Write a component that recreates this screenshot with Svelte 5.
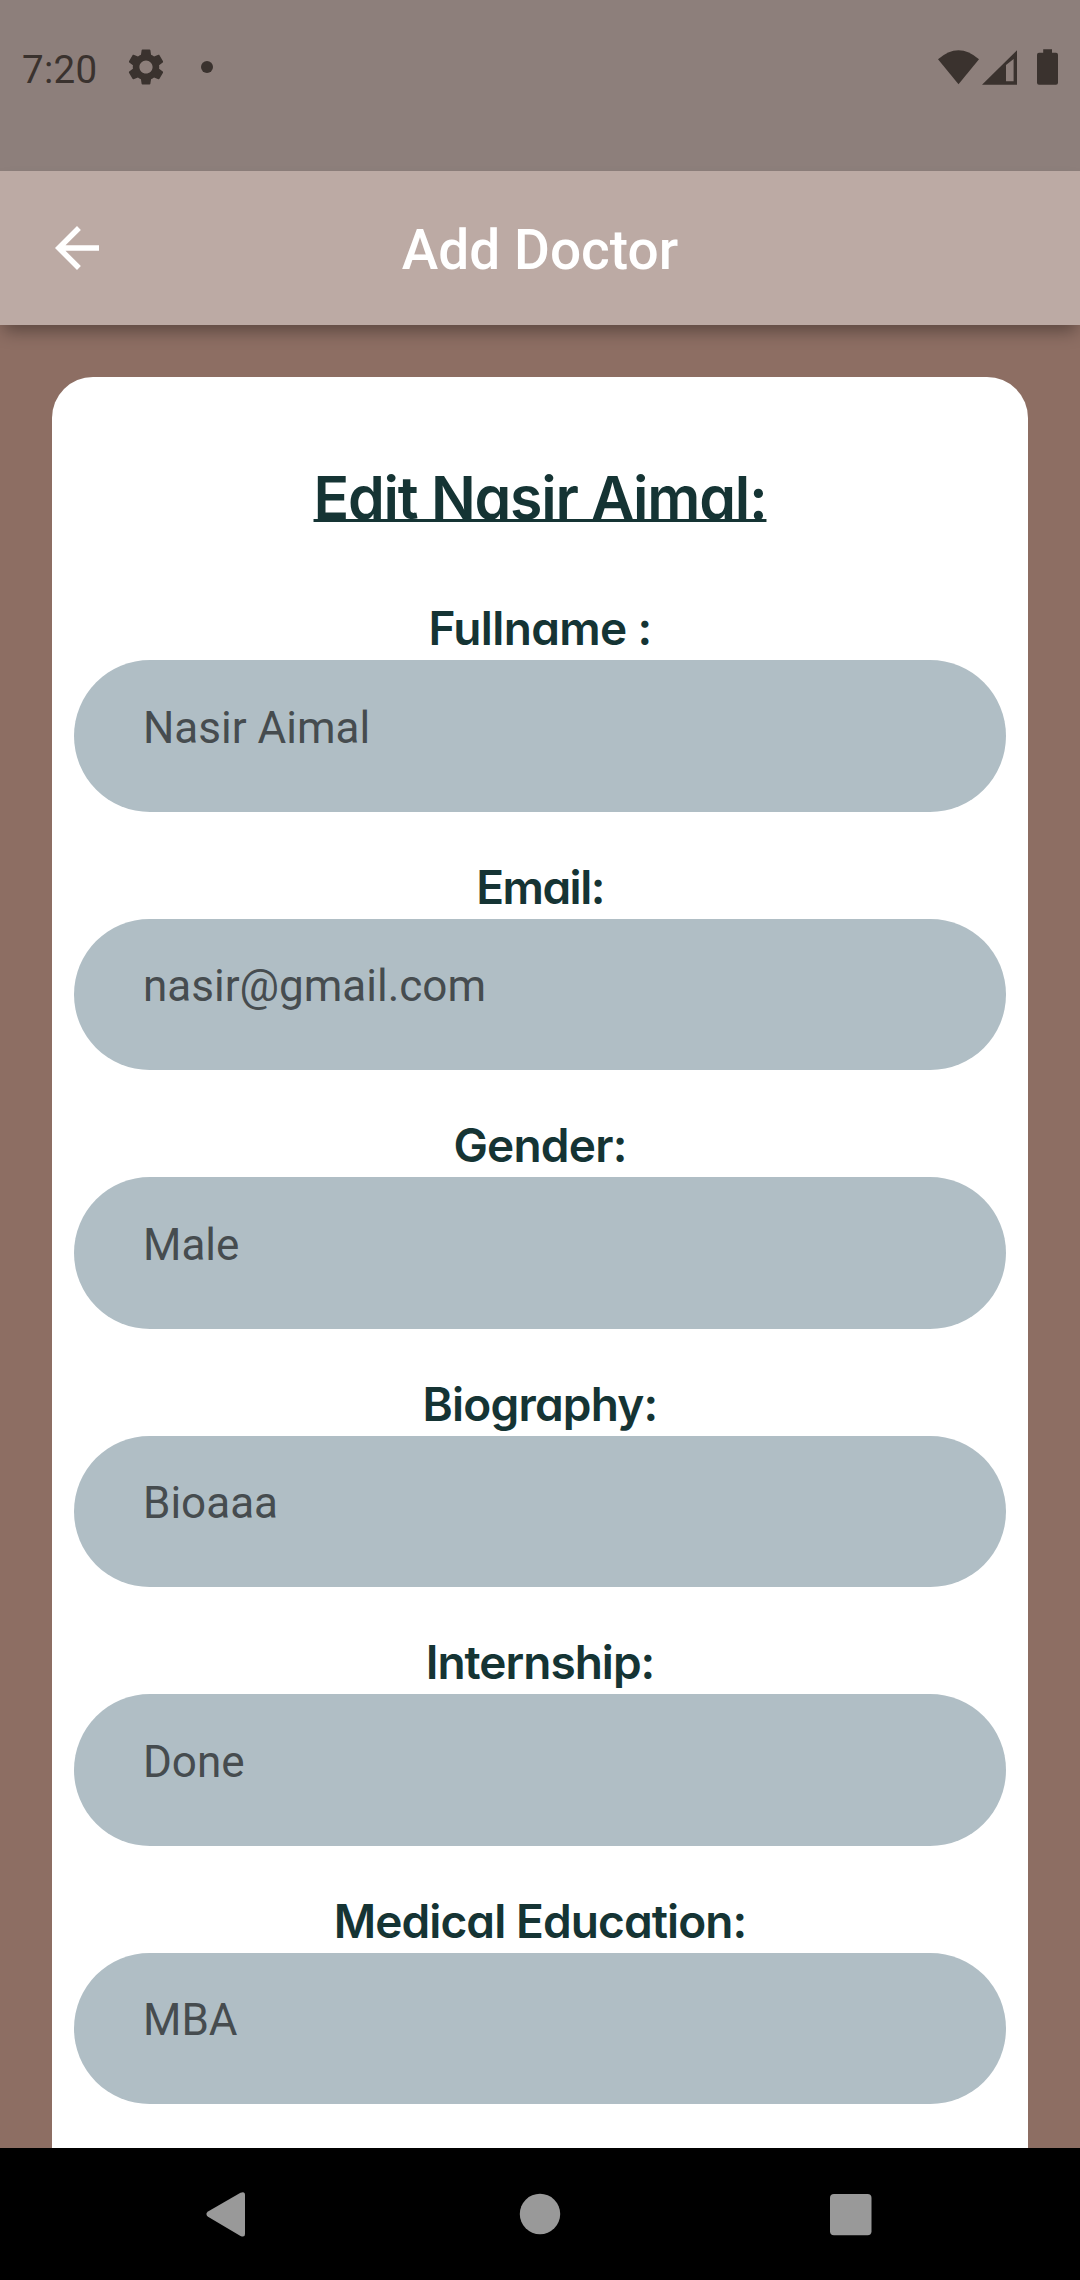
<script>
  const fields = [
    { label: 'Fullname :', value: 'Nasir Aimal', tone: 'fullname' },
    { label: 'Email:', value: 'nasir@gmail.com', tone: 'email' },
    { label: 'Gender:', value: 'Male', tone: 'gender' },
    { label: 'Biography:', value: 'Bioaaa', tone: 'biography' },
    { label: 'Internship:', value: 'Done', tone: 'internship' },
    { label: 'Medical Education:', value: 'MBA', tone: 'education' }
  ];
</script>

<div class="screen">
  <header class="status">
    <span class="time">7:20</span>
    <svg class="gear" width="44" height="44" viewBox="0 0 24 24">
      <path d="M19.14,12.94c0.04-0.3,0.06-0.61,0.06-0.94c0-0.32-0.02-0.64-0.07-0.94l2.03-1.58c0.18-0.14,0.23-0.41,0.12-0.61l-1.92-3.32c-0.12-0.22-0.37-0.29-0.59-0.22l-2.39,0.96c-0.5-0.38-1.03-0.7-1.62-0.94L14.4,2.81c-0.04-0.24-0.24-0.41-0.48-0.41h-3.84c-0.24,0-0.43,0.17-0.47,0.41L9.25,5.35C8.66,5.59,8.12,5.92,7.63,6.29L5.24,5.33c-0.22-0.08-0.47,0-0.59,0.22L2.74,8.87C2.62,9.08,2.66,9.34,2.86,9.48l2.03,1.58C4.84,11.36,4.8,11.69,4.8,12s0.02,0.64,0.07,0.94l-2.03,1.58c-0.18,0.14-0.23,0.41-0.12,0.61l1.92,3.32c0.12,0.22,0.37,0.29,0.59,0.22l2.39-0.96c0.5,0.38,1.03,0.7,1.62,0.94l0.36,2.54c0.05,0.24,0.24,0.41,0.48,0.41h3.84c0.24,0,0.44-0.17,0.47-0.41l0.36-2.54c0.59-0.24,1.13-0.56,1.62-0.94l2.39,0.96c0.22,0.08,0.47,0,0.59-0.22l1.92-3.32c0.12-0.22,0.07-0.47-0.12-0.61L19.14,12.94z M12,15.6c-1.98,0-3.6-1.62-3.6-3.6s1.62-3.6,3.6-3.6s3.6,1.62,3.6,3.6S13.98,15.6,12,15.6z" />
    </svg>
    <span class="dot"></span>
    <div class="indicators">
      <svg width="122" height="38" viewBox="937 48 122 38">
        <path d="M938 59.3 Q958.5 41.2 979 59.3 L958.5 84.2Z" />
        <path fill-rule="evenodd" d="M982 84.8 L1017 50.3 V84.8Z M1006 65 V81.3 H1013.6 V59Z" />
        <path d="M1043.2 49.2 h8.8 v3.6 h4 a2 2 0 0 1 2 2 v27.9 a2 2 0 0 1 -2 2 h-17 a2 2 0 0 1 -2 -2 v-27.9 a2 2 0 0 1 2 -2 h4.2z" />
      </svg>
    </div>
  </header>

  <div class="appbar">
    <svg class="back" width="66" height="66" viewBox="0 0 24 24">
      <path d="M20 11H7.83l5.59-5.59L12 4l-8 8 8 8 1.41-1.41L7.83 13H20v-2z" />
    </svg>
    <h1>Add Doctor</h1>
  </div>

  <main>
    <section class="card">
      <h2>Edit Nasir Aimal:</h2>
      {#each fields as field}
        <div class="row">
          <div class="label"><span class={field.tone}>{field.label}</span></div>
          <div class="field">{field.value}</div>
        </div>
      {/each}
    </section>
  </main>

  <nav>
    <svg width="1080" height="132" viewBox="0 2148 1080 132">
      <path d="M240.5 2192.8 Q245 2191 245 2195 V2234 Q245 2237.8 240.5 2236 L208 2216.8 Q204.8 2214.2 208 2211.6Z" />
      <circle cx="540" cy="2214" r="20.2" />
      <rect x="830" y="2194" width="41.5" height="41.2" rx="4" />
    </svg>
  </nav>
</div>

<style>
  :global(body) { margin: 0; }
  .screen {
    width: 1080px;
    height: 2280px;
    overflow: hidden;
    display: flex;
    flex-direction: column;
    background: #8d6e63;
    font-family: Roboto, "Liberation Sans", sans-serif;
  }
  .status {
    height: 171px;
    flex: none;
    box-sizing: border-box;
    padding: 37px 21px 0 22px;
    display: flex;
    align-items: flex-start;
    background: #8d7f7b;
    color: #3a322e;
  }
  .status svg, nav svg { display: block; }
  .status svg { fill: #3a322e; }
  .time {
    width: 102px;
    font-size: 38.5px;
    line-height: 66px;
    letter-spacing: 0.3px;
  }
  .gear { margin-top: 8px; }
  .dot {
    width: 12px;
    height: 12px;
    margin: 24px 0 0 33px;
    border-radius: 50%;
    background: #3a322e;
  }
  .indicators { margin: 11px 0 0 auto; }
  .appbar {
    height: 154px;
    flex: none;
    box-sizing: border-box;
    padding: 0 44px;
    display: grid;
    grid-template-columns: 66px 1fr 66px;
    align-items: center;
    background: #bcaaa4;
    box-shadow: 0 10px 16px -4px rgba(0, 0, 0, 0.36);
    z-index: 1;
  }
  .back { fill: #fff; }
  h1 {
    margin: 0;
    padding-top: 4px;
    text-align: center;
    color: #fff;
    font-size: 55px;
    font-weight: 500;
    line-height: 66px;
  }
  main {
    flex: 1;
    min-height: 0;
    overflow: hidden;
    padding: 52.3px 52.3px 0;
  }
  .card {
    height: 2000px;
    box-sizing: border-box;
    padding: 81px 22px 0;
    border-radius: 41px;
    background: #fff;
  }
  h2 {
    margin: 0 0 14.9px;
    height: 80px;
    text-align: center;
    font: 600 59px/80px Inter, "Liberation Sans", sans-serif;
    font-feature-settings: "cv11";
    letter-spacing: -1.25px;
    color: #153434;
    text-decoration: underline;
    text-decoration-thickness: 3px;
    text-underline-offset: 0px;
    text-decoration-skip-ink: none;
  }
  .row { height: 258.5px; }
  .label {
    height: 107.25px;
    box-sizing: border-box;
    padding-top: 45.2px;
    text-align: center;
    font: 600 46px/60px Inter, "Liberation Sans", sans-serif;
    font-feature-settings: "cv11";
    color: #153434;
  }
  .fullname { letter-spacing: -0.65px; }
  .email { letter-spacing: -1.5px; }
  .gender, .biography { letter-spacing: -0.8px; }
  .internship { letter-spacing: -1px; }
  .education { letter-spacing: -0.9px; }
  .field {
    height: 151.25px;
    box-sizing: border-box;
    padding: 41.5px 68px 0 68.7px;
    border-radius: 76px;
    background: #b0bec5;
    color: #464c4f;
    font-size: 44px;
    line-height: 52px;
  }
  nav {
    height: 132px;
    flex: none;
    background: #000;
    fill: #999;
  }
</style>
